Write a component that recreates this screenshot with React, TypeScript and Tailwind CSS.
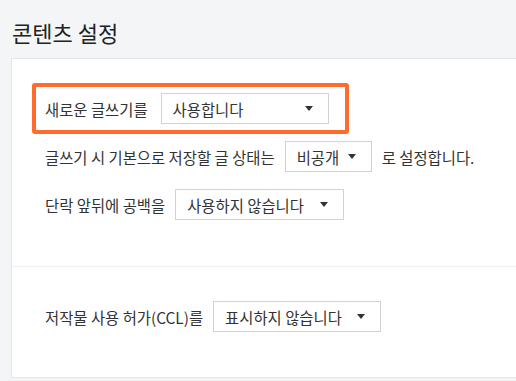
const font = { fontFamily: '"Noto Sans CJK KR", "Noto Sans", sans-serif' };

interface SelectBoxProps {
    value: string;
    width: string;
}

const SelectBox: React.FC<SelectBoxProps> = ({ value, width }) => {
    return (
        <div
            className={`${width} h-[31px] flex items-center justify-between border border-[#cfd2d6] bg-white pl-[11px] pr-[15px] text-[#333] shrink-0`}
        >
            <span>{value}</span>
            <svg width="8" height="5" viewBox="0 0 8 5" className="shrink-0">
                <path d="M0 0 L8 0 L4 5 Z" fill="#333" />
            </svg>
        </div>
    );
};

export default function App() {
    return (
        <div
            className="w-[516px] h-[381px] overflow-hidden bg-[#f4f5f7] text-[15.4px] leading-[22px] text-[#333]"
            style={font}
        >
            <h2 className="h-[58px] pl-[12px] pt-[17px] text-[22px] leading-[30px] text-[#222]">
                콘텐츠 설정
            </h2>
            <div className="ml-[11px] bg-white border-l border-t border-b border-[#e3e5e8]">
                <div className="pl-[20px] pt-[24px] pb-[46px] border-b border-[#eff0f2]">
                    <div className="inline-flex items-center gap-[13px] h-[51px] border-4 border-[#ff6b2c] rounded-[3px] pl-[9px] pr-[16px]">
                        <span>새로운 글쓰기를</span>
                        <SelectBox value="사용합니다" width="w-[168px]" />
                    </div>
                    <div className="flex items-center gap-[10px] pl-[13px] mt-[7px]">
                        <span>글쓰기 시 기본으로 저장할 글 상태는</span>
                        <SelectBox value="비공개" width="w-[87px]" />
                        <span>로 설정합니다.</span>
                    </div>
                    <div className="flex items-center gap-[10px] pl-[13px] mt-[17px]">
                        <span>단락 앞뒤에 공백을</span>
                        <SelectBox value="사용하지 않습니다" width="w-[169px]" />
                    </div>
                </div>
                <div className="pl-[33px] pt-[34px] pb-[45px]">
                    <div className="flex items-center gap-[10px]">
                        <span>저작물 사용 허가(CCL)를</span>
                        <SelectBox value="표시하지 않습니다" width="w-[168px]" />
                    </div>
                </div>
            </div>
        </div>
    );
}
